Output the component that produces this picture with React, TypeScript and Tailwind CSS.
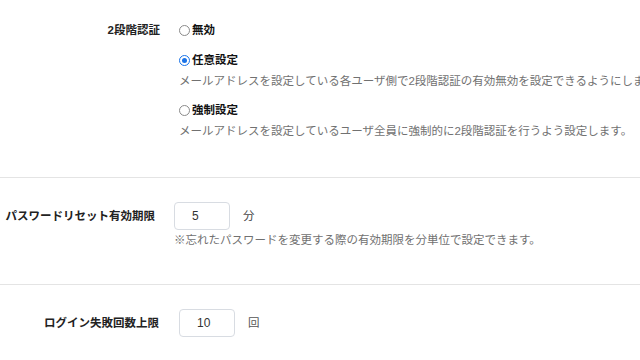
import { useState } from 'react'

const font = 'font-["Liberation_Sans","Noto_Sans_CJK_JP",sans-serif]'

type Option = { value: string; label: string; desc?: string }

const options: Option[] = [
  { value: 'off', label: '無効' },
  { value: 'optional', label: '任意設定', desc: 'メールアドレスを設定している各ユーザ側で2段階認証の有効無効を設定できるようにします。' },
  { value: 'forced', label: '強制設定', desc: 'メールアドレスを設定しているユーザ全員に強制的に2段階認証を行うよう設定します。' },
]

function Radio({ checked }: { checked: boolean }) {
  return checked ? (
    <span className="flex h-[11px] w-[11px] shrink-0 items-center justify-center rounded-full border-[1.5px] border-[#1a73e8] bg-white">
      <span className="h-[5px] w-[5px] rounded-full bg-[#1a73e8]" />
    </span>
  ) : (
    <span className="h-[11px] w-[11px] shrink-0 rounded-full border border-[#8a8a8a] bg-white" />
  )
}

export default function App() {
  const [mode, setMode] = useState('optional')
  const [minutes, setMinutes] = useState('5')
  const [limit, setLimit] = useState('10')

  const inputCls = 'h-[28px] w-[56px] rounded-[4px] border border-[#d8dce2] bg-white pl-[17px] text-[12px] text-[#333] outline-none'

  return (
    <div className={`h-[360px] w-[640px] overflow-hidden bg-white text-[11.5px] leading-[16px] ${font}`}>
      {/* 2段階認証 */}
      <div className="flex gap-[19px] pt-[22px] pb-[38px]">
        <div className="w-[160px] shrink-0 text-right font-bold text-[#222]">2段階認証</div>
        <div className="flex min-w-0 flex-col whitespace-nowrap">
          {options.map((o, i) => (
            <div key={o.value} className={i === 1 ? 'mt-[14px]' : i === 2 ? 'mt-[13px]' : ''}>
              <label className="flex cursor-pointer items-center gap-[2px]" onClick={() => setMode(o.value)}>
                <Radio checked={mode === o.value} />
                <span className="font-bold text-[#111]">{o.label}</span>
              </label>
              {o.desc && <p className="mt-[5px] text-[#717171]">{o.desc}</p>}
            </div>
          ))}
        </div>
      </div>

      {/* パスワードリセット有効期限 */}
      <div className="flex gap-[19px] border-t border-[#e4e4e4] pt-[24px] pb-[36px]">
        <div className="flex h-[28px] w-[155px] shrink-0 items-center justify-end whitespace-nowrap font-bold text-[#222]">パスワードリセット有効期限</div>
        <div>
          <div className="flex items-center">
            <input className={inputCls} value={minutes} onChange={e => setMinutes(e.target.value)} />
            <span className="ml-[13px] text-[#444]">分</span>
          </div>
          <p className="mt-[2px] whitespace-nowrap text-[#717171]">※忘れたパスワードを変更する際の有効期限を分単位で設定できます。</p>
        </div>
      </div>

      {/* ログイン失敗回数上限 */}
      <div className="flex gap-[20px] border-t border-[#e4e4e4] pt-[24px]">
        <div className="flex h-[28px] w-[159px] shrink-0 items-center justify-end font-bold text-[#222]">ログイン失敗回数上限</div>
        <div className="flex items-center">
          <input className={inputCls} value={limit} onChange={e => setLimit(e.target.value)} />
          <span className="ml-[13px] text-[#555]">回</span>
        </div>
      </div>
    </div>
  )
}
